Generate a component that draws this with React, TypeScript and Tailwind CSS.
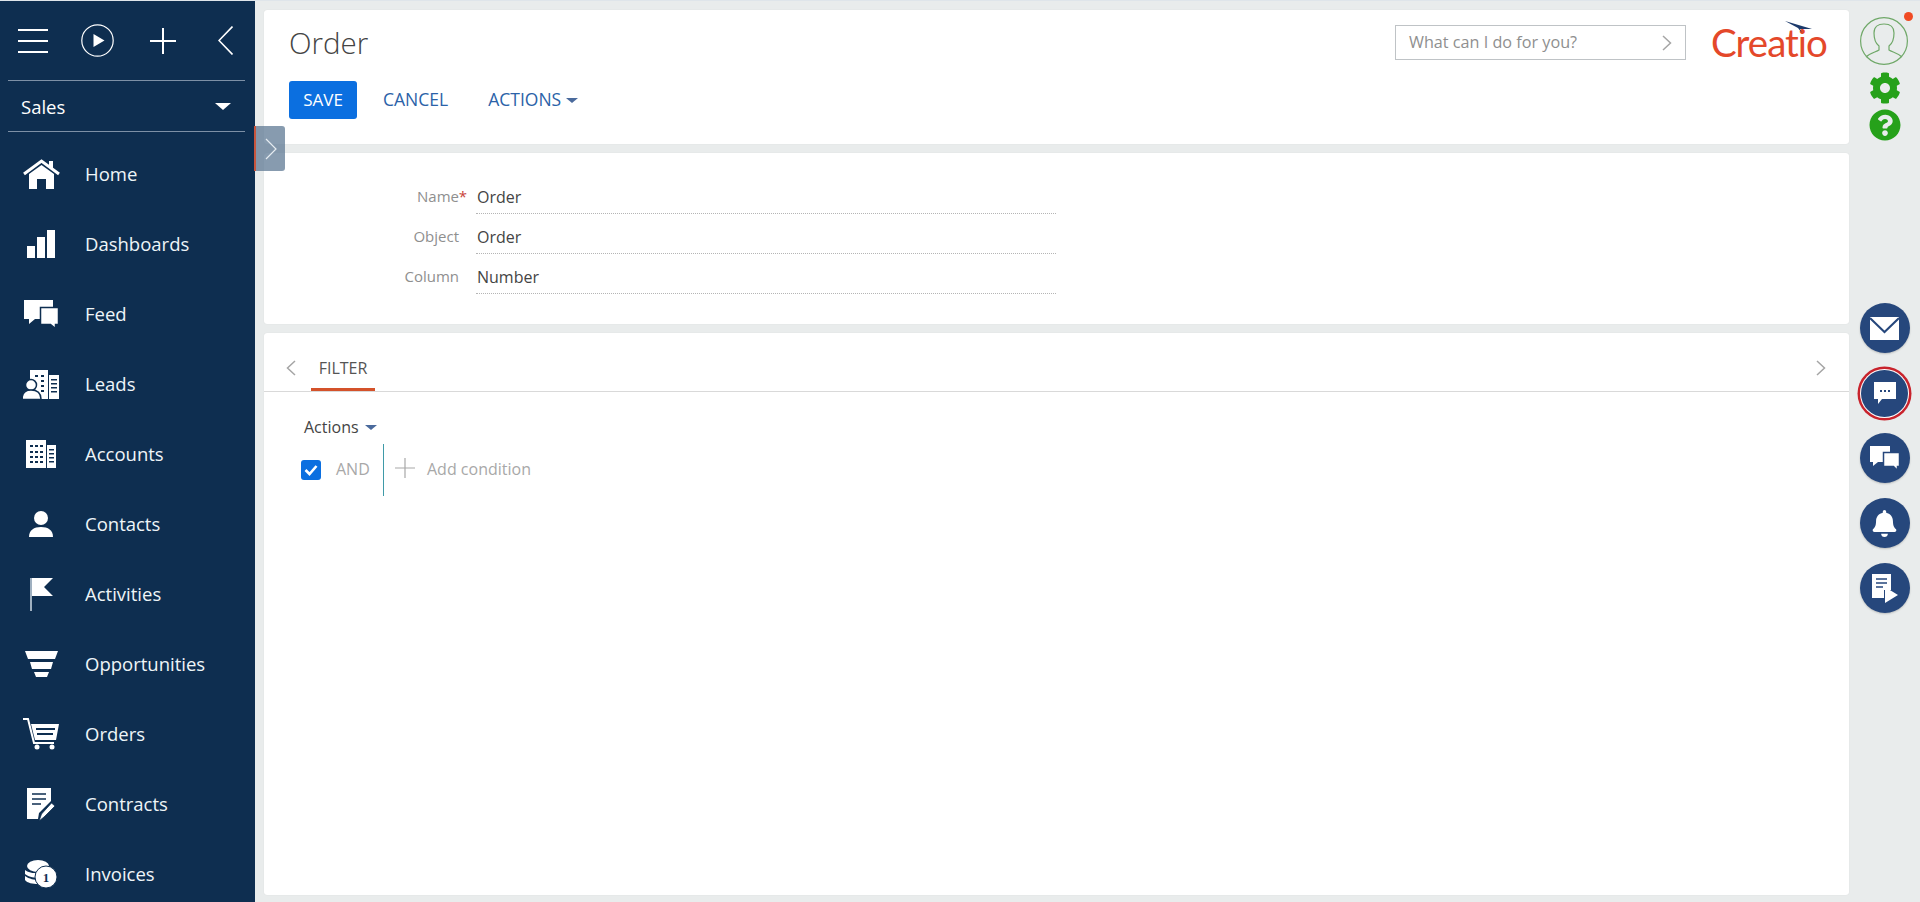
import React from 'react';
import { FaCog, FaQuestionCircle, FaBell } from 'react-icons/fa';

const HomeIcon = () => (
  <svg width="37" height="31" viewBox="0 0 37 31" fill="none">
    <path d="M1 15 18.5 2 36 15" stroke="#fff" strokeWidth="3" />
    <path d="M26 2h4v8l-4-3z" fill="#fff" />
    <path fillRule="evenodd" d="M6 15 18.5 6 31 15v15H23V20H14V30H6z" fill="#fff" />
  </svg>
);

const BarsIcon = () => (
  <svg width="28" height="28" viewBox="0 0 28 28" fill="#fff">
    <rect x="0" y="16" width="8" height="12" />
    <rect x="10" y="7" width="8" height="21" />
    <rect x="20" y="0" width="8" height="28" />
  </svg>
);

const FeedIcon = () => (
  <svg width="35" height="30" viewBox="0 0 35 30" fill="#fff">
    <path d="M0 1h29v19H11l-6 5v-5H0z" />
    <path d="M16.5 8.5h18v17h-3v4l-5-4h-10z" stroke="#0e2e50" strokeWidth="1.5" />
  </svg>
);

const LeadsIcon = () => (
  <svg width="36" height="29" viewBox="0 0 36 29" fill="#fff">
    <path d="M7 0h18v29H7z" />
    <path d="M26 5h10v24H26z" />
    <g fill="#0e2e50">
      <rect x="12" y="5" width="3" height="2" />
      <rect x="18" y="5" width="3" height="2" />
      <rect x="18" y="10" width="3" height="2" />
      <rect x="18" y="15" width="3" height="2" />
      <rect x="18" y="20" width="3" height="2" />
      <rect x="28" y="9" width="6" height="1.5" />
      <rect x="28" y="13" width="6" height="1.5" />
      <rect x="28" y="17" width="6" height="1.5" />
      <rect x="28" y="21" width="6" height="1.5" />
    </g>
    <circle cx="8" cy="15" r="5.5" stroke="#0e2e50" strokeWidth="1.5" />
    <path d="M-1 29.5c0-7 3-9.5 9-9.5s10 2.5 10 9.5z" stroke="#0e2e50" strokeWidth="1.5" />
  </svg>
);

const AccountsIcon = () => (
  <svg width="30" height="28" viewBox="0 0 30 28" fill="#fff">
    <path d="M0 0h20v28H0z" />
    <path d="M21 5h9v23h-9z" />
    <g fill="#0e2e50">
      <rect x="4" y="5" width="3" height="2" />
      <rect x="9" y="5" width="3" height="2" />
      <rect x="14" y="5" width="3" height="2" />
      <rect x="4" y="11" width="3" height="2" />
      <rect x="9" y="11" width="3" height="2" />
      <rect x="14" y="11" width="3" height="2" />
      <rect x="4" y="16" width="3" height="2" />
      <rect x="9" y="16" width="3" height="2" />
      <rect x="14" y="16" width="3" height="2" />
      <rect x="4" y="21" width="3" height="2" />
      <rect x="9" y="21" width="3" height="2" />
      <rect x="14" y="21" width="3" height="2" />
      <rect x="23" y="9" width="5" height="1.5" />
      <rect x="23" y="13" width="5" height="1.5" />
      <rect x="23" y="17" width="5" height="1.5" />
      <rect x="23" y="21" width="5" height="1.5" />
    </g>
  </svg>
);

const ContactIcon = () => (
  <svg width="24" height="26" viewBox="0 0 24 26" fill="#fff">
    <circle cx="12" cy="7" r="7" />
    <path d="M0 26c0-7 5-10 12-10s12 3 12 10z" />
  </svg>
);

const FlagIcon = () => (
  <svg width="23" height="33" viewBox="0 0 23 33" fill="#fff">
    <rect x="0" y="0" width="2" height="33" fill="#9fb0c0" />
    <path d="M2 0h21l-9 9 9 9H2z" />
  </svg>
);

const FunnelIcon = () => (
  <svg width="33" height="26" viewBox="0 0 33 26" fill="#fff">
    <path d="M0 0h33l-3 8H3z" />
    <path d="M5 11h23l-2 7H7z" />
    <path d="M9 21h15l-2 5H11z" />
  </svg>
);

const CartIcon = () => (
  <svg width="36" height="32" viewBox="0 0 36 32" fill="none">
    <path d="M0 1h5l6 24h20" stroke="#fff" strokeWidth="2" />
    <path d="M8 6h28l-3 16H12z" fill="#fff" />
    <path d="M13 11h19M14 16h16" stroke="#0e2e50" strokeWidth="2" />
    <circle cx="14" cy="29" r="2.5" fill="#fff" />
    <circle cx="29" cy="29" r="2.5" fill="#fff" />
  </svg>
);

const ContractIcon = () => (
  <svg width="28" height="33" viewBox="0 0 28 33" fill="#fff">
    <path d="M0 0h24v13L12 25l-1 6H0z" />
    <path d="M5 6h14M5 11h14M5 16h9" stroke="#0e2e50" strokeWidth="1.5" />
    <path d="M12 33l2.5-7 10-11 3.5 3-11 11z" stroke="#0e2e50" strokeWidth="0.8" />
  </svg>
);

const CoinsIcon = () => (
  <svg width="32" height="28" viewBox="0 0 32 28">
    <ellipse cx="13" cy="6" rx="11" ry="6" fill="#fff" />
    <path d="M0 10c4 4 18 4 22 2v4c-6 3-18 2-22-2zM0 16c4 3 10 4 13 4v4c-5 0-11-1-13-4z" fill="#fff" />
    <circle cx="21" cy="17" r="11" fill="#fff" stroke="#0e2e50" strokeWidth="1" />
    <text x="21" y="22" textAnchor="middle" fontSize="13" fontWeight="700" fill="#0e2e50" fontFamily="'Liberation Serif', serif">1</text>
  </svg>
);

const navItems = [
  { label: 'Home', icon: <HomeIcon /> },
  { label: 'Dashboards', icon: <BarsIcon /> },
  { label: 'Feed', icon: <FeedIcon /> },
  { label: 'Leads', icon: <LeadsIcon /> },
  { label: 'Accounts', icon: <AccountsIcon /> },
  { label: 'Contacts', icon: <ContactIcon /> },
  { label: 'Activities', icon: <FlagIcon /> },
  { label: 'Opportunities', icon: <FunnelIcon /> },
  { label: 'Orders', icon: <CartIcon /> },
  { label: 'Contracts', icon: <ContractIcon /> },
  { label: 'Invoices', icon: <CoinsIcon /> },
];

const Sidebar = () => (
  <aside className="w-[255px] h-full shrink-0 bg-[#0e2e50] text-white overflow-hidden">
    <div className="h-[79px] flex items-center pl-[18px]">
      <svg width="30" height="24" viewBox="0 0 30 24" stroke="#fff" strokeWidth="2">
        <path d="M0 1h30M0 12h30M0 23h30" />
      </svg>
      <svg width="33" height="33" viewBox="0 0 33 33" fill="none" className="ml-[33px]">
        <circle cx="16.5" cy="16.5" r="15.7" stroke="#fff" strokeWidth="1.2" />
        <path d="M12.5 10v13l11-6.5z" fill="#fff" />
      </svg>
      <svg width="26" height="26" viewBox="0 0 26 26" stroke="#fff" strokeWidth="2" className="ml-[36px]">
        <path d="M0 13h26M13 0v26" />
      </svg>
      <svg width="15" height="29" viewBox="0 0 15 29" fill="none" stroke="#fff" strokeWidth="1.6" className="ml-[42px]">
        <path d="M14.5 0.5 1 14.5 14.5 28.5" />
      </svg>
    </div>
    <div className="ml-[8px] mr-[10px] h-[52px] border-y border-[#7d90a6] flex items-center justify-between pl-[13px] pr-[14px]">
      <span className="text-[18.5px] pt-[1px]">Sales</span>
      <span className="w-0 h-0 border-x-[8px] border-x-transparent border-t-[7px] border-t-white" />
    </div>
    <nav className="pt-[7px]">
      {navItems.map((item) => (
        <div key={item.label} className="h-[70px] flex items-center">
          <div className="w-[85px] pr-[3px] flex justify-center">{item.icon}</div>
          <span className="text-[18.5px] text-[#eef5f8]">{item.label}</span>
        </div>
      ))}
    </nav>
  </aside>
);

const FormRow = ({ label, value, required }: { label: string; value: string; required?: boolean }) => (
  <div className="h-[40px] flex">
    <div className="w-[195px] h-[39px] pt-[6px] flex items-center justify-end text-[15px] text-[#8f8f8f] relative">
      {label}
      {required && <span className="absolute right-[-8px] text-[#c9423a]">*</span>}
    </div>
    <div className="ml-[17px] w-[580px] h-[40px] pt-[6px] flex items-center pl-[1px] border-b border-dotted border-[#b5b5b5] text-[16px] text-[#444]">
      {value}
    </div>
  </div>
);

const Caret = () => <span className="block w-0 h-0 border-x-[6px] border-x-transparent border-t-[5px] border-t-[#4a6a9c]" />;

const Chevron = ({ dir }: { dir: 'left' | 'right' }) => (
  <svg width="10" height="16" viewBox="0 0 10 16" fill="none" stroke="#a5a5a5" strokeWidth="1.5">
    <path d={dir === 'left' ? 'M9 1 1.5 8 9 15' : 'M1 1 8.5 8 1 15'} />
  </svg>
);

const Main = () => (
  <main className="flex-1 min-w-0 flex flex-col gap-[9px] pl-[9px] pb-[7px]">
    <section className="h-[134px] shrink-0 bg-white rounded-[3px] shadow-[0_0_1px_rgba(0,0,0,0.12)] px-[25px] flex flex-col">
      <div className="h-[71px] flex items-start justify-between">
        <h1 className="mt-[10px] text-[29.5px] font-light leading-[46px] text-[#444]">Order</h1>
        <div className="flex items-start mr-[-3px]">
          <div className="mt-[15px] w-[291px] h-[35px] border border-[#bfc3c6] flex items-center justify-between pl-[13px] pr-[13px] text-[16.2px] text-[#8f8f8f]">
            What can I do for you?
            <Chevron dir="right" />
          </div>
          <div className="relative ml-[25px] w-[116px] h-[60px]">
            <span className="absolute left-0 top-[7px] text-[38.5px] leading-[50px] tracking-[-1px] text-[#e4482a] font-['Lato',sans-serif]">Creatio</span>
            <svg className="absolute left-[74px] top-[11px]" width="27" height="12" viewBox="0 0 27 12" fill="#1c3a6b">
              <path d="M0 0 27 8 15 8 17 12 13 7z" />
            </svg>
          </div>
        </div>
      </div>
      <div className="flex items-center">
        <button className="w-[68px] h-[38px] bg-[#0b6fe0] rounded-[3px] text-white text-[17px]">SAVE</button>
        <span className="ml-[26px] pb-[2px] text-[17.5px] text-[#2b62a8]">CANCEL</span>
        <span className="ml-[40px] pb-[2px] text-[17.5px] text-[#2b62a8]">ACTIONS</span>
        <span className="ml-[5px]"><Caret /></span>
      </div>
    </section>
    <section className="h-[171px] shrink-0 bg-white rounded-[3px] shadow-[0_0_1px_rgba(0,0,0,0.12)] pt-[21px]">
      <FormRow label="Name" value="Order" required />
      <FormRow label="Object" value="Order" />
      <FormRow label="Column" value="Number" />
    </section>
    <section className="flex-1 min-h-0 bg-white rounded-[3px] shadow-[0_0_1px_rgba(0,0,0,0.12)]">
      <div className="h-[59px] border-b border-[#d9d9d9] flex items-center justify-between pl-[22px] pr-[23px]">
        <div className="flex items-center h-full">
          <span className="mt-[12px]"><Chevron dir="left" /></span>
          <div className="ml-[15px] w-[64px] h-full border-b-[3px] border-[#d4522a] flex items-center justify-center pt-[15px] text-[16px] text-[#555]">FILTER</div>
        </div>
        <span className="mt-[12px]"><Chevron dir="right" /></span>
      </div>
      <div className="pl-[37px] pt-[23px] text-[16px]">
        <div className="h-[24px] flex items-center pl-[3px] text-[#444]">
          Actions
          <span className="ml-[6px]"><Caret /></span>
        </div>
        <div className="h-[52px] mt-[5px] flex items-center">
          <span className="w-[20px] h-[20px] bg-[#0b6fe0] rounded-[3px] flex items-center justify-center">
            <svg width="14" height="12" viewBox="0 0 14 12" fill="none" stroke="#fff" strokeWidth="2.6">
              <path d="M1.5 6 5.5 10 12.5 2" />
            </svg>
          </span>
          <span className="ml-[15px] w-[47px] text-[#a8a8a8] pb-[2px]">AND</span>
          <span className="w-[1px] h-[52px] bg-[#3f9aa8]" />
          <svg className="ml-[11px] mb-[4px]" width="20" height="20" viewBox="0 0 20 20" stroke="#a8a8a8" strokeWidth="1.2">
            <path d="M0 10h20M10 0v20" />
          </svg>
          <span className="ml-[12px] text-[#a8a8a8] pb-[2px]">Add condition</span>
        </div>
      </div>
    </section>
  </main>
);

const RoundBtn = ({ children, ring }: { children: React.ReactNode; ring?: boolean }) => (
  <div className="w-[50px] h-[50px] flex items-center justify-center">
    <div className={ring ? 'w-[47px] h-[47px] rounded-full bg-[#26477c] flex items-center justify-center shadow-[0_0_0_1px_#fff,0_0_0_3.5px_#c8232c]' : 'w-[50px] h-[50px] rounded-full bg-[#26477c] flex items-center justify-center shadow-[0_1px_2px_rgba(0,0,0,0.2)]'}>
      {children}
    </div>
  </div>
);

const Rail = () => (
  <aside className="w-[71px] shrink-0 flex flex-col items-center">
    <div className="relative mt-[7px] mr-[2px] w-[48px] h-[48px]">
      <svg width="48" height="48" viewBox="0 0 48 48" fill="none" stroke="#6fa868" strokeWidth="1.2">
        <circle cx="24" cy="24" r="23.4" />
        <path d="M6 40c4-4 10-5 13-7v-4c-4-3-5-8-5-13 0-6 4-9 10-9s10 3 10 9c0 5-1 10-5 13v4c3 2 9 3 13 7" />
      </svg>
      <span className="absolute right-[-5px] top-[-5px] w-[9px] h-[9px] rounded-full bg-[#f04a23]" />
    </div>
    <FaCog className="mt-[7px] text-[#26a11a]" size={32} />
    <FaQuestionCircle className="mt-[5px] text-[#26a11a]" size={32} />
    <div className="mt-[162px] flex flex-col gap-[15px]">
      <RoundBtn>
        <svg width="29" height="23" viewBox="0 0 29 23">
          <rect width="29" height="23" fill="#fff" />
          <path d="M0 1 14.5 15 29 1" fill="none" stroke="#26477c" strokeWidth="2" />
        </svg>
      </RoundBtn>
      <RoundBtn ring>
        <svg width="22" height="22" viewBox="0 0 22 22" fill="#fff">
          <path d="M0 0h22v17H8l-4 5v-5H0z" />
          <g fill="#26477c">
            <rect x="6" y="8" width="2" height="2" />
            <rect x="10" y="8" width="2" height="2" />
            <rect x="14" y="8" width="2" height="2" />
          </g>
        </svg>
      </RoundBtn>
      <RoundBtn>
        <svg width="30" height="25" viewBox="0 0 30 25" fill="#fff">
          <path d="M0 0h20v16H8l-5 4v-4H0z" />
          <path d="M13.5 6.5h16v14h-2v4l-4-4h-10z" stroke="#26477c" strokeWidth="1.5" />
        </svg>
      </RoundBtn>
      <RoundBtn>
        <FaBell className="text-white" size={27} />
      </RoundBtn>
      <RoundBtn>
        <svg width="26" height="29" viewBox="0 0 26 29" fill="#fff">
          <path d="M0 0h19v16l-7 0v8H0z" />
          <path d="M4 5h11M4 9h11M4 13h7" stroke="#26477c" strokeWidth="1.3" />
          <path d="M13 13 26 21 13 29z" />
        </svg>
      </RoundBtn>
    </div>
  </aside>
);

export default function App() {
  return (
    <div className="relative w-[1920px] h-[902px] overflow-hidden bg-[#e9ecec] font-['Open_Sans',sans-serif] flex flex-col">
      <div className="h-px shrink-0 bg-[#dfe5ea]" />
      <div className="flex-1 min-h-0 flex">
        <Sidebar />
        <div className="flex-1 min-w-0 flex pt-[9px]">
          <Main />
          <Rail />
        </div>
      </div>
      <div className="absolute left-[254px] top-[126px] w-[31px] h-[45px] bg-[#5f7a94]/75 border-l-2 border-[#c8553d] rounded-r-[3px] flex items-center justify-center">
        <svg width="12" height="22" viewBox="0 0 12 22" fill="none" stroke="#e6ecf1" strokeWidth="1.2">
          <path d="M1 1 11 11 1 21" />
        </svg>
      </div>
    </div>
  );
}
